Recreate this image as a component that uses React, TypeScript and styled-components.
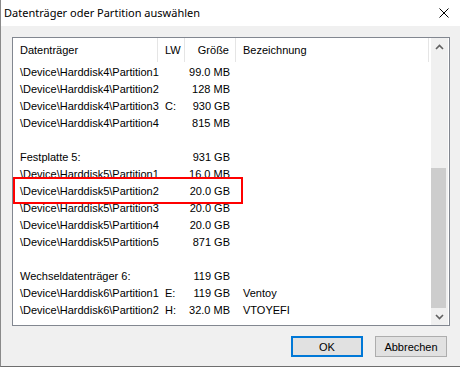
import React from 'react'
import styled, { createGlobalStyle } from 'styled-components'

const GlobalStyle = createGlobalStyle`
  html, body {
    margin: 0;
    padding: 0;
    background: #f0f0f0;
  }
  body {
    font-family: 'Liberation Sans', Arial, sans-serif;
    font-size: 11px;
    color: #000;
  }
`

type Row = { name?: string; lw?: string; size?: string; label?: string }

const rows: Row[] = [
  { name: '\\Device\\Harddisk4\\Partition1', size: '99.0 MB' },
  { name: '\\Device\\Harddisk4\\Partition2', size: '128 MB' },
  { name: '\\Device\\Harddisk4\\Partition3', lw: 'C:', size: '930 GB' },
  { name: '\\Device\\Harddisk4\\Partition4', size: '815 MB' },
  {},
  { name: 'Festplatte 5:', size: '931 GB' },
  { name: '\\Device\\Harddisk5\\Partition1', size: '16.0 MB' },
  { name: '\\Device\\Harddisk5\\Partition2', size: '20.0 GB' },
  { name: '\\Device\\Harddisk5\\Partition3', size: '20.0 GB' },
  { name: '\\Device\\Harddisk5\\Partition4', size: '20.0 GB' },
  { name: '\\Device\\Harddisk5\\Partition5', size: '871 GB' },
  {},
  { name: 'Wechseldatenträger 6:', size: '119 GB' },
  { name: '\\Device\\Harddisk6\\Partition1', lw: 'E:', size: '119 GB', label: 'Ventoy' },
  { name: '\\Device\\Harddisk6\\Partition2', lw: 'H:', size: '32.0 MB', label: 'VTOYEFI' },
]

const Window = styled.div`
  position: relative;
  width: 460px;
  height: 367px;
  box-sizing: border-box;
  display: flex;
  flex-direction: column;
  border-left: 1px solid #8a8a8a;
  border-bottom: 1px solid #6e6e6e;
  background: #f0f0f0;
  overflow: hidden;
`

const TitleBar = styled.div`
  height: 26px;
  flex: none;
  background: #fff;
  display: flex;
  align-items: center;
  justify-content: space-between;
  padding: 0 11px 0 3px;
`

const Title = styled.span`
  font-family: 'Noto Sans', 'Liberation Sans', sans-serif;
  font-size: 11px;
  line-height: 16px;
`

const Body = styled.div`
  flex: 1;
  display: flex;
  flex-direction: column;
  padding: 11px 10px 0 11px;
`

const ListBox = styled.div`
  height: 289px;
  box-sizing: border-box;
  border: 1px solid #828790;
  background: #fff;
  display: flex;
  overflow: hidden;
`

const Table = styled.div`
  flex: 1;
  display: flex;
  flex-direction: column;
`

const cols = '145px 27px 51px 193px'

const HeaderRow = styled.div`
  display: grid;
  grid-template-columns: ${cols};
  height: 25px;
  margin-bottom: 1px;
`

const HeaderCell = styled.div<{ $align?: 'right' }>`
  display: flex;
  align-items: center;
  justify-content: ${p => (p.$align === 'right' ? 'flex-end' : 'flex-start')};
  padding: 0 ${p => (p.$align === 'right' ? '6px' : '0')} 0 ${p => (p.$align === 'right' ? '0' : '7px')};
  border-right: 1px solid #e5e5e5;
  height: 24px;
  white-space: nowrap;
`

const DataRow = styled.div`
  display: grid;
  grid-template-columns: ${cols};
  height: 17px;
  line-height: 17px;
`

const Cell = styled.div<{ $align?: 'right' }>`
  text-align: ${p => p.$align ?? 'left'};
  padding: ${p => (p.$align === 'right' ? '0 6px 0 0' : '0 0 0 7px')};
  white-space: nowrap;
`

const ScrollBar = styled.div`
  width: 17px;
  flex: none;
  background: #f0f0f0;
  display: flex;
  flex-direction: column;
  margin-right: 1px;
`

const ScrollArrow = styled.div`
  height: 17px;
  display: flex;
  align-items: center;
  justify-content: center;
`

const Track = styled.div`
  flex: 1;
  display: flex;
  flex-direction: column;
  justify-content: flex-end;
`

const Thumb = styled.div`
  height: 140px;
  margin: 0 2px 0 0;
  background: #cdcdcd;
`

const Footer = styled.div`
  display: flex;
  justify-content: flex-end;
  gap: 12px;
  padding: 10px 3px 0 0;
`

const Button = styled.button<{ $default?: boolean }>`
  width: 72px;
  height: 21px;
  box-sizing: border-box;
  background: #e1e1e1;
  border: ${p => (p.$default ? '2px solid #0078d7' : '1px solid #adadad')};
  font-family: inherit;
  font-size: 11px;
  color: #000;
  padding: 0;
  margin: 0;
`

const Highlight = styled.div`
  position: absolute;
  left: 12px;
  top: 177px;
  width: 230px;
  height: 27px;
  box-sizing: border-box;
  border: 2px solid #ff0000;
  pointer-events: none;
`

const CloseIcon = () => (
  <svg width="10" height="10" viewBox="0 0 10 10">
    <path d="M0.5 0.5 L9.5 9.5 M9.5 0.5 L0.5 9.5" stroke="#000" strokeWidth="1" />
  </svg>
)

const Chevron: React.FC<{ up?: boolean }> = ({ up }) => (
  <svg width="9" height="6" viewBox="0 0 9 6">
    <path
      d={up ? 'M1 5 L4.5 1.5 L8 5' : 'M1 1 L4.5 4.5 L8 1'}
      stroke="#606060"
      strokeWidth="1.6"
      fill="none"
    />
  </svg>
)

export default function App() {
  return (
    <>
      <GlobalStyle />
      <Window>
        <TitleBar>
          <Title>Datenträger oder Partition auswählen</Title>
          <CloseIcon />
        </TitleBar>
        <Body>
          <ListBox>
            <Table>
              <HeaderRow>
                <HeaderCell>Datenträger</HeaderCell>
                <HeaderCell>LW</HeaderCell>
                <HeaderCell $align="right">Größe</HeaderCell>
                <HeaderCell>Bezeichnung</HeaderCell>
              </HeaderRow>
              {rows.map((r, i) => (
                <DataRow key={i}>
                  <Cell>{r.name}</Cell>
                  <Cell>{r.lw}</Cell>
                  <Cell $align="right">{r.size}</Cell>
                  <Cell>{r.label}</Cell>
                </DataRow>
              ))}
            </Table>
            <ScrollBar>
              <ScrollArrow>
                <Chevron up />
              </ScrollArrow>
              <Track>
                <Thumb />
              </Track>
              <ScrollArrow>
                <Chevron />
              </ScrollArrow>
            </ScrollBar>
          </ListBox>
          <Footer>
            <Button $default>OK</Button>
            <Button>Abbrechen</Button>
          </Footer>
        </Body>
        <Highlight />
      </Window>
    </>
  )
}
